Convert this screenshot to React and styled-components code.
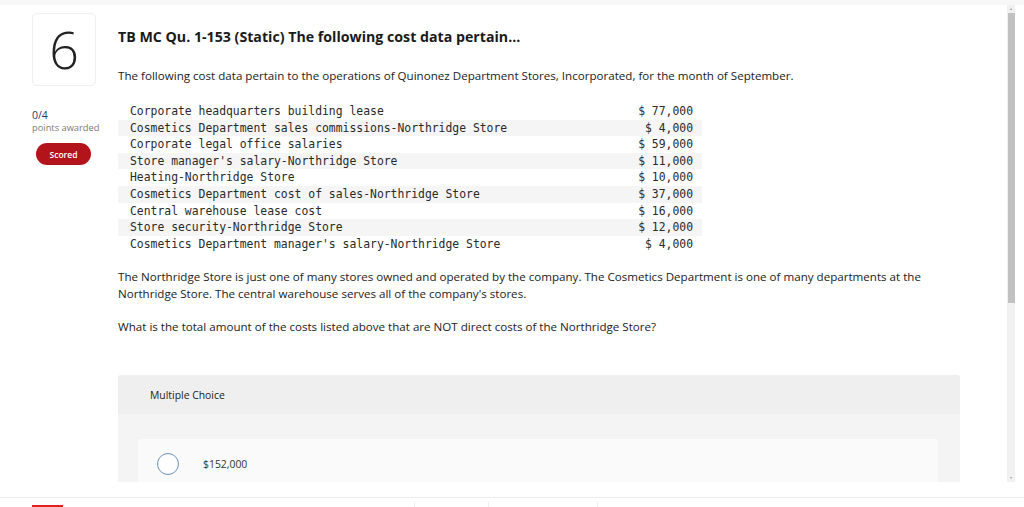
import React from 'react';
import styled, { createGlobalStyle } from 'styled-components';

const GlobalStyle = createGlobalStyle`
  html, body { margin: 0; padding: 0; background: #fff; }
  body { font-family: "Open Sans", Lato, sans-serif; color: #222; }
  * { box-sizing: border-box; }
`;

const costs = [
  ['Corporate headquarters building lease', '$ 77,000'],
  ['Cosmetics Department sales commissions-Northridge Store', '$ 4,000'],
  ['Corporate legal office salaries', '$ 59,000'],
  ["Store manager's salary-Northridge Store", '$ 11,000'],
  ['Heating-Northridge Store', '$ 10,000'],
  ['Cosmetics Department cost of sales-Northridge Store', '$ 37,000'],
  ['Central warehouse lease cost', '$ 16,000'],
  ['Store security-Northridge Store', '$ 12,000'],
  ["Cosmetics Department manager's salary-Northridge Store", '$ 4,000'],
];

export default function App() {
  return (
    <Page>
      <GlobalStyle />
      <TopStrip />
      <Viewport>
        <Content>
          <Aside>
            <NumberBox>6</NumberBox>
            <Points>0/4</Points>
            <PointsLabel>points awarded</PointsLabel>
            <ScoredBadge>Scored</ScoredBadge>
          </Aside>
          <Main>
            <Title>TB MC Qu. 1-153 (Static) The following cost data pertain...</Title>
            <Intro>
              The following cost data pertain to the operations of Quinonez Department Stores, Incorporated, for the month of September.
            </Intro>
            <CostTable>
              <tbody>
                {costs.map(([label, amount], i) => (
                  <CostRow key={i} $striped={i % 2 === 1}>
                    <CostLabel>{label}</CostLabel>
                    <CostAmount>{amount}</CostAmount>
                  </CostRow>
                ))}
              </tbody>
            </CostTable>
            <Paragraph>
              The Northridge Store is just one of many stores owned and operated by the company. The Cosmetics Department is one of many departments at the Northridge Store. The central warehouse serves all of the company's stores.
            </Paragraph>
            <Paragraph>
              What is the total amount of the costs listed above that are NOT direct costs of the Northridge Store?
            </Paragraph>
            <ChoiceBox>
              <ChoiceHeader>Multiple Choice</ChoiceHeader>
              <ChoiceBody>
                <Option>
                  <Radio />
                  <OptionText>$152,000</OptionText>
                </Option>
              </ChoiceBody>
            </ChoiceBox>
          </Main>
        </Content>
        <ScrollTrack>
          <ScrollArrow>▴</ScrollArrow>
          <ScrollThumb />
          <ScrollSpacer />
          <ScrollArrow>▾</ScrollArrow>
        </ScrollTrack>
      </Viewport>
      <Footer>
        <FooterTabs>
          <FooterTab $active $width={86} />
          <FooterTab $width={328} />
          <FooterTab $width={74} $divider />
          <FooterTab $width={109} $divider />
          <FooterTab $divider />
        </FooterTabs>
      </Footer>
    </Page>
  );
}

const Page = styled.div`
  width: 1024px;
  height: 507px;
  display: flex;
  flex-direction: column;
  overflow: hidden;
`;

const TopStrip = styled.div`
  height: 5px;
  background: #f7f7f7;
`;

const Viewport = styled.div`
  height: 477px;
  display: flex;
  overflow: hidden;
`;

const Content = styled.div`
  flex: 1;
  display: flex;
  padding: 8px 0 0 32px;
`;

const Aside = styled.div`
  width: 86px;
  flex-shrink: 0;
`;

const NumberBox = styled.div`
  width: 64px;
  height: 73px;
  border: 1px solid #f0f0f0;
  border-radius: 5px;
  display: flex;
  align-items: center;
  justify-content: center;
  font-size: 52px;
  font-weight: 300;
  color: #222;
  padding-bottom: 2px;
`;

const Points = styled.div`
  margin-top: 22px;
  font-size: 10.5px;
  line-height: 14px;
  color: #1e3d66;
`;

const PointsLabel = styled.div`
  font-size: 9.3px;
  line-height: 12px;
  color: #7a7a7a;
`;

const ScoredBadge = styled.div`
  margin: 9px 0 0 4px;
  width: 55px;
  height: 22px;
  border-radius: 11px;
  background: #b3131b;
  color: #fff;
  font-size: 8.5px;
  font-weight: 600;
  display: flex;
  align-items: center;
  justify-content: center;
`;

const Main = styled.div`
  width: 842px;
  flex-shrink: 0;
  padding-top: 14px;
`;

const Title = styled.h2`
  margin: 0;
  font-size: 14.2px;
  line-height: 20px;
  font-weight: 700;
  color: #1a1a1a;
`;

const Intro = styled.p`
  margin: 20px 0 0;
  font-size: 11.6px;
  line-height: 17px;
  color: #222;
`;

const CostTable = styled.table`
  margin-top: 19px;
  width: 584px;
  border-collapse: collapse;
  font-family: "DejaVu Sans Mono", "Liberation Mono", monospace;
  font-size: 11.4px;
  color: #2a2a2a;
`;

const CostRow = styled.tr`
  height: 16.6px;
  background: ${({ $striped }) => ($striped ? '#f5f5f5' : 'transparent')};
`;

const CostLabel = styled.td`
  padding: 1px 0 0 12px;
  line-height: 15.6px;
  white-space: nowrap;
`;

const CostAmount = styled.td`
  padding: 1px 9px 0 0;
  line-height: 15.6px;
  text-align: right;
  white-space: nowrap;
`;

const Paragraph = styled.p`
  margin: 16px 0 0;
  font-size: 11.6px;
  line-height: 17px;
  color: #222;
`;

const ChoiceBox = styled.div`
  margin-top: 40px;
  background: #f4f4f4;
  border-radius: 3px 3px 0 0;
  padding-bottom: 30px;
`;

const ChoiceHeader = styled.div`
  height: 39px;
  background: #efefef;
  border-radius: 3px 3px 0 0;
  padding-left: 32px;
  display: flex;
  align-items: center;
  font-size: 10.4px;
  color: #222;
`;

const ChoiceBody = styled.div`
  padding: 25px 22px 0 20px;
`;

const Option = styled.div`
  background: #fafafa;
  border-radius: 3px;
  padding: 14px 19px;
  display: flex;
  align-items: center;
  gap: 24px;
`;

const Radio = styled.span`
  width: 22px;
  height: 22px;
  border-radius: 50%;
  border: 1px solid #6f8fb8;
  background: #fff;
  flex-shrink: 0;
`;

const OptionText = styled.span`
  font-size: 10.4px;
  color: #333;
`;

const ScrollTrack = styled.div`
  width: 8px;
  margin-right: 9px;
  background: #f1f1f1;
  display: flex;
  flex-direction: column;
  align-items: center;
`;

const ScrollArrow = styled.div`
  height: 8px;
  font-size: 4px;
  line-height: 8px;
  color: #999;
`;

const ScrollThumb = styled.div`
  width: 7px;
  height: 290px;
  background: #c1c1c1;
`;

const ScrollSpacer = styled.div`
  flex: 1;
`;

const Footer = styled.div`
  flex: 1;
  display: flex;
  flex-direction: column;
  justify-content: flex-end;
`;

const FooterTabs = styled.div`
  height: 10px;
  border-top: 1px solid #ececec;
  display: flex;
`;

const FooterTab = styled.div`
  position: relative;
  width: ${({ $width }) => ($width ? `${$width}px` : 'auto')};
  flex: ${({ $width }) => ($width ? '0 0 auto' : '1')};
  margin-top: 4px;
  border-left: ${({ $divider }) => ($divider ? '1px solid #eeeeee' : 'none')};

  ${({ $active }) =>
    $active &&
    `
    &::after {
      content: '';
      position: absolute;
      left: 32px;
      bottom: 0;
      width: 31px;
      height: 2px;
      background: #e2202a;
    }
  `}
`;
